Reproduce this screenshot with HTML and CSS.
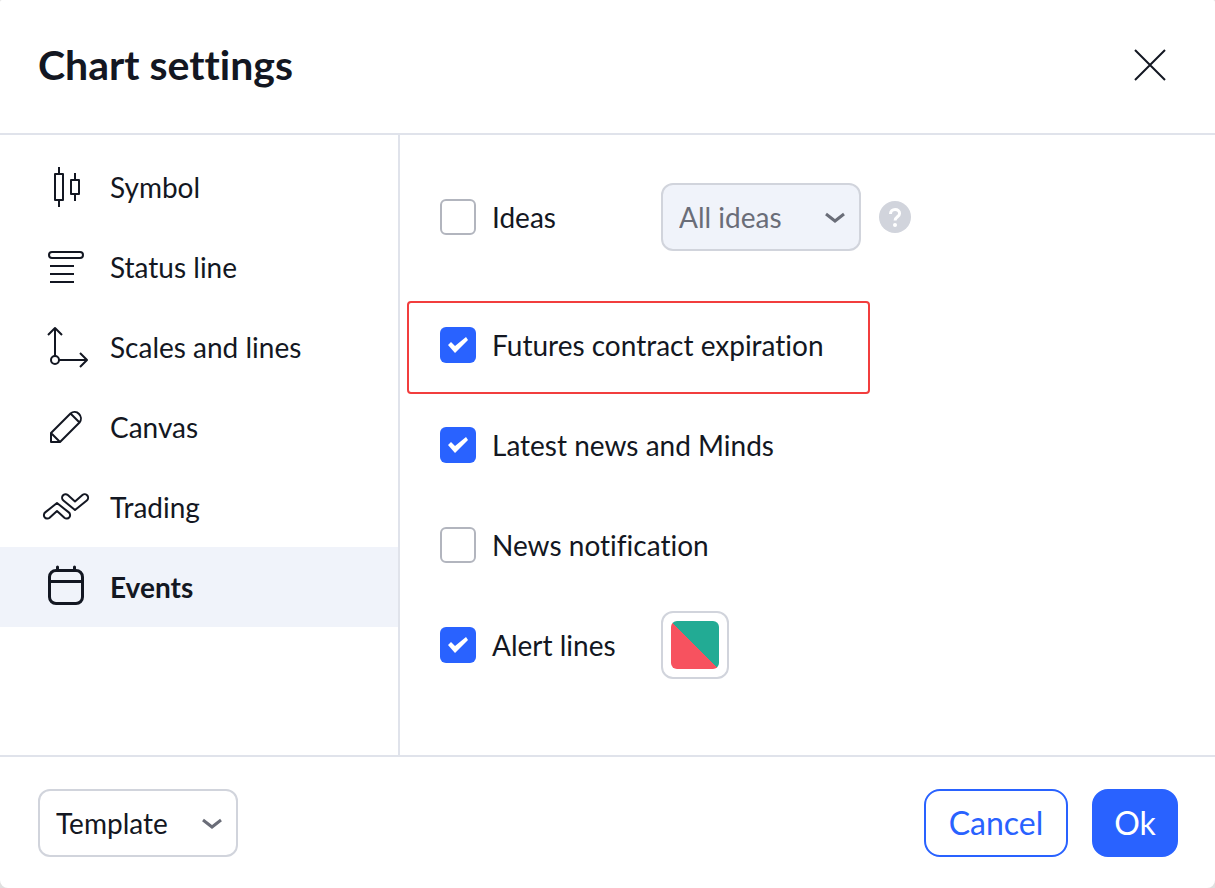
FILE: index.html
```html
<!DOCTYPE html>
<html lang="en">
  <head>
    <meta charset="UTF-8" />
    <meta name="viewport" content="width=device-width, initial-scale=1.0" />
    <title>Chart settings</title>
    <link rel="stylesheet" href="styles.css">
  </head>
  <body>
    <div class="dialog" role="dialog" aria-labelledby="dialogTitle">
      <header class="dialog-header">
        <h1 id="dialogTitle">Chart settings</h1>
        <button type="button" class="close-btn" aria-label="Close">
          <svg width="36" height="36" viewBox="0 0 36 36">
            <path d="M3 3l30 30M33 3L3 33" />
          </svg>
        </button>
      </header>

      <div class="dialog-body">
        <nav class="sidebar">
          <button type="button" class="tab">
            <svg class="tab-icon" viewBox="0 0 56 56">
              <path d="M21 8v6M21 42v6M37 14v6M37 36v6" />
              <rect x="17" y="15" width="8" height="26" />
              <rect x="33" y="21" width="8" height="14" />
            </svg>
            Symbol
          </button>
          <button type="button" class="tab">
            <svg class="tab-icon" viewBox="0 0 56 56">
              <rect x="11" y="13" width="34" height="6" rx="3" />
              <path d="M12 27h24M12 35h24M12 43h24" />
            </svg>
            Status line
          </button>
          <button type="button" class="tab">
            <svg class="tab-icon" viewBox="0 0 56 56">
              <circle cx="17" cy="41" r="4" />
              <path d="M17 37V9M10 16l7-7 7 7M21 41h28M42 34l7 7-7 7" />
            </svg>
            Scales and lines
          </button>
          <button type="button" class="tab">
            <svg class="tab-icon" viewBox="0 0 56 56">
              <path d="M13 43v-9L32.5 14.5a6.4 6.4 0 0 1 9 9L22 43zM13 34l9 9M32.5 14.5l9 9" />
            </svg>
            Canvas
          </button>
          <button type="button" class="tab">
            <svg class="tab-icon" viewBox="0 0 56 56">
              <path d="M19 24L7.2 33.4a3.4 3.4 0 0 0 4.4 5.4L19 32l7.4 6.8a3.4 3.4 0 0 0 4.4-5.4z" />
              <path d="M37 31L25.4 21.4a3.4 3.4 0 0 1 4.4-5.4L37 22.5l7.4-6.5a3.4 3.4 0 0 1 4.4 5.4z" />
            </svg>
            Trading
          </button>
          <button type="button" class="tab active">
            <svg class="tab-icon" viewBox="0 0 56 56">
              <rect x="11.5" y="11.5" width="33" height="33" rx="6.5" />
              <path d="M12 22.5h32M19.5 8v3M36.5 8v3" />
            </svg>
            Events
          </button>
        </nav>

        <form class="content">
          <div class="row">
            <label class="option">
              <input type="checkbox" />
              Ideas
            </label>
            <div class="select-box">
              <select aria-label="Ideas filter" disabled>
                <option>All ideas</option>
              </select>
              <svg class="chevron" viewBox="0 0 20 12"><path d="M1 2l9 7 9-7" /></svg>
            </div>
            <svg class="help" viewBox="0 0 32 32" role="img" aria-label="Help">
              <circle cx="16" cy="16" r="16" />
              <path d="M11.5 13c0-2.8 2-4.5 4.6-4.500s4.500 1.600 4.500 4c0 3.200-4.500 3.400-4.500 7" />
              <circle class="dot" cx="16" cy="24" r="2" />
            </svg>
          </div>
          <div class="highlight">
            <label class="option">
              <input type="checkbox" checked />
              Futures contract expiration
            </label>
          </div>
          <div class="row">
            <label class="option">
              <input type="checkbox" checked />
              Latest news and Minds
            </label>
          </div>
          <div class="row">
            <label class="option">
              <input type="checkbox" />
              News notification
            </label>
          </div>
          <div class="row">
            <label class="option">
              <input type="checkbox" checked />
              Alert lines
            </label>
            <button type="button" class="color-btn" aria-label="Alert line colors">
              <span class="swatch"></span>
            </button>
          </div>
        </form>
      </div>

      <footer class="dialog-footer">
        <div class="select-box">
          <select aria-label="Template">
            <option>Template</option>
          </select>
          <svg class="chevron" viewBox="0 0 20 12"><path d="M1 2l9 7 9-7" /></svg>
        </div>
        <div class="actions">
          <button type="button" class="btn">Cancel</button>
          <button type="button" class="btn primary">Ok</button>
        </div>
      </footer>
    </div>
  </body>
</html>
```
FILE: styles.css
```css
* {
  box-sizing: border-box;
}

body {
  margin: 0;
  background: #e0e0e0;
  color: #131722;
  font-family: "Trebuchet MS", Lato, sans-serif;
  font-size: 28px;
  line-height: 36px;
  font-variant-ligatures: none;
}

button,
select {
  font: inherit;
  color: inherit;
  cursor: pointer;
}

svg {
  fill: none;
  stroke: currentColor;
  stroke-width: 2;
}

.dialog {
  display: flex;
  flex-direction: column;
  min-height: 100vh;
  background: #fff;
  border-radius: 2px 2px 8px 8px;
}

.dialog-header {
  display: flex;
  justify-content: space-between;
  align-items: center;
  padding: 40px 47px 43px 38px;
  border-bottom: 2px solid #e0e3eb;
}

h1 {
  margin: 0;
  font-size: 41px;
  line-height: 50px;
}

.close-btn {
  display: flex;
  padding: 0;
  border: none;
  background: none;
}

.dialog-body {
  display: flex;
  flex: 1;
}

.sidebar {
  width: 400px;
  padding-top: 12px;
  border-right: 2px solid #e0e3eb;
}

.tab {
  display: flex;
  align-items: center;
  gap: 16px;
  width: 100%;
  height: 80px;
  padding: 0 38px;
  border: none;
  background: none;
}

.tab.active {
  background: #f0f3fa;
  font-weight: 700;
}

.tab-icon {
  width: 56px;
  height: 56px;
  stroke-linejoin: round;
}

.tab.active .tab-icon {
  stroke-width: 3;
  stroke-linecap: round;
}

.content {
  flex: 1;
  padding: 48px 40px 32px;
}

.row {
  display: flex;
  align-items: center;
  height: 68px;
  margin-bottom: 32px;
}

.row .option {
  min-width: 221px;
}

.option {
  display: flex;
  align-items: center;
  gap: 16px;
}

.highlight {
  width: fit-content;
  min-width: 463px;
  margin: 50px 0 17px -33px;
  padding: 24px 31px 29px;
  border: 2px solid #f23d3d;
  border-radius: 4px;
}

input[type="checkbox"] {
  appearance: none;
  width: 36px;
  height: 36px;
  margin: 0;
  border: 2px solid #b2b5be;
  border-radius: 6px;
}

input[type="checkbox"]:checked {
  border: none;
  background: #2962ff;
}

input[type="checkbox"]:checked::before {
  content: "";
  display: block;
  width: 36px;
  height: 36px;
  background: #fff;
  clip-path: polygon(8px 18px, 11px 15px, 15px 19px, 26px 10px, 28px 13px, 15px 26px);
}

.select-box {
  position: relative;
  width: 200px;
}

select {
  display: block;
  appearance: none;
  width: 100%;
  height: 68px;
  padding: 0 50px 0 16px;
  border: 2px solid #d1d4dc;
  border-radius: 12px;
  background: #fff;
}

select:disabled {
  background: #f0f3fa;
  color: #6a6d78;
  opacity: 1;
}

.chevron {
  position: absolute;
  right: 16px;
  top: 29px;
  width: 20px;
  height: 12px;
  color: #6a6d78;
  stroke-width: 3;
  pointer-events: none;
}

.help {
  width: 32px;
  height: 32px;
  margin-left: 18px;
  fill: #d1d4dc;
  stroke: none;
}

.help path {
  stroke: #fff;
  stroke-width: 3;
}

.help .dot {
  fill: #fff;
}

.color-btn {
  width: 68px;
  height: 68px;
  padding: 8px;
  border: 2px solid #d1d4dc;
  border-radius: 12px;
  background: #fff;
}

.swatch {
  display: block;
  height: 48px;
  border-radius: 6px;
  background: linear-gradient(45deg, #f7525f 50%, #22ab94 50%);
}

.dialog-footer {
  display: flex;
  justify-content: space-between;
  padding: 32px 37px 31px 38px;
  border-top: 2px solid #e0e3eb;
}

.actions {
  display: flex;
  gap: 24px;
}

.btn {
  min-width: 144px;
  height: 68px;
  padding: 0 16px;
  border: 2px solid #2962ff;
  border-radius: 16px;
  background: #fff;
  color: #2962ff;
  font-size: 32px;
}

.btn.primary {
  min-width: 86px;
  background: #2962ff;
  color: #fff;
}
```
